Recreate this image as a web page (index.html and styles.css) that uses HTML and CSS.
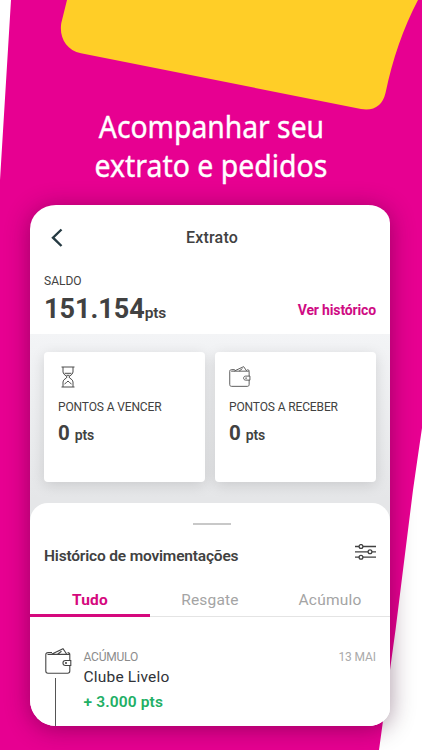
FILE: index.html
```html
<!DOCTYPE html>
<html lang="pt-BR">
<head>
<meta charset="utf-8">
<title>Extrato</title>
<link rel="stylesheet" href="styles.css">
</head>
<body>
<svg width="0" height="0" class="defs" aria-hidden="true">
  <symbol id="wallet" viewBox="0 0 27 26">
    <path d="M7 4.500H3.200C1.700 4.500.8 5.200.8 6.600V23c0 1.400.8 2.200 2.200 2.200h19.600c1.400 0 2.200-.8 2.200-2.200v-5.500M24.800 12.500V6.600c0-1.400-.8-2.100-2.200-2.100M2.500 6.400h22M6.500 6.200 18 .8l3.800 5.400M12.500 6.200l4-3M25.800 12.500h-5.300c-3.400 0-3.400 5 0 5h5.300z"/>
    <circle cx="21" cy="15" r=".5"/>
  </symbol>
</svg>
<main class="promo">
  <svg class="backdrop" viewBox="0 0 422 750" aria-hidden="true">
    <path fill="#e70091" d="M11 0H422V428Q418 455 413 490L395.500 630L379 750H0V180Z"/>
    <path fill="#ffce27" d="M67 0H418Q396 42 385.500 93Q381 112 361 109L81 53.300C66 50 59 37 61.300 23Z"/>
  </svg>
  <h1 class="headline"><span class="line">Acompanhar seu</span><span class="line second">extrato e pedidos</span></h1>
  <section class="phone">
    <header class="bar">
      <svg class="back" viewBox="0 0 12 20"><path d="M10.500 1.500 2 9.700l8.500 8.300"/></svg>
      <h2 class="title">Extrato</h2>
    </header>
    <div class="balance">
      <div>
        <div class="label">SALDO</div>
        <div class="amount">151.154<small>pts</small></div>
      </div>
      <a class="history">Ver histórico</a>
    </div>
    <div class="cards">
      <article class="card">
        <svg class="icon hourglass" viewBox="0 0 14 22"><path d="M.5 1h13M.5 21h13M2 1v5c0 3 4 3.500 4 5s-4 2-4 5v5M12 1v5c0 3-4 3.500-4 5s4 2 4 5v5M3.500 7.300h7M5.500 9.300h3M3.500 18l2-1.500L7 15l1.500 1.500 2 1.500"/></svg>
        <div class="card-label">PONTOS A VENCER</div>
        <div class="points">0 <small>pts</small></div>
      </article>
      <article class="card">
        <svg class="icon"><use href="#wallet"/></svg>
        <div class="card-label">PONTOS A RECEBER</div>
        <div class="points">0 <small>pts</small></div>
      </article>
    </div>
    <section class="sheet">
      <div class="handle"></div>
      <div class="sheet-head">
        <h3 class="sheet-title">Histórico de movimentações</h3>
        <svg class="filter" viewBox="0 0 21 16"><path d="M0 2.500h4M8 2.500h13M0 7.800h13M17 7.800h4M0 13.200h4M8 13.200h13"/><circle cx="6" cy="2.500" r="1.900"/><circle cx="15" cy="7.800" r="1.900"/><circle cx="6" cy="13.200" r="1.900"/></svg>
      </div>
      <nav class="tabs"><span class="tab active">Tudo</span><span class="tab">Resgate</span><span class="tab">Acúmulo</span></nav>
      <div class="entry">
        <div class="rail"><svg class="entry-icon"><use href="#wallet"/></svg><i class="stem"></i></div>
        <div class="detail">
          <div class="kind">ACÚMULO</div>
          <div class="name">Clube Livelo</div>
          <div class="gain">+ 3.000 pts</div>
        </div>
        <time class="date">13 MAI</time>
      </div>
    </section>
  </section>
</main>
</body>
</html>
```
FILE: styles.css
```css
* { box-sizing: border-box; }
body { margin: 0; font-family: Roboto, "Liberation Sans", sans-serif; color: #414141; }
h1, h2, h3 { margin: 0; }
.defs { position: absolute; }
.promo { position: relative; width: 422px; height: 750px; overflow: hidden; background: #fff; padding-top: 107px; }
.backdrop { position: absolute; inset: 0; width: 422px; height: 750px; }
.headline { position: relative; height: 98px; display: flex; flex-direction: column; align-items: center; color: #fff; font: 400 31px/39px "Noto Sans", sans-serif; white-space: nowrap; -webkit-text-stroke: .4px #fff; }
.line { transform: scaleX(.912); }
.second { transform: scaleX(.917); }
.phone { position: relative; display: flex; flex-direction: column; width: 360px; height: 521px; margin-left: 30px; overflow: hidden; background: #fff; border-radius: 26px 22px 22px 26px / 24px 18px 18px 26px; box-shadow: 0 3px 24px rgba(50, 0, 35, .42); }
.bar, .balance, .cards { flex-shrink: 0; }
.bar { display: flex; align-items: center; height: 66px; padding-left: 21px; }
.back { width: 12px; height: 20px; margin-top: -1px; fill: none; stroke: #263b43; stroke-width: 2.400; }
.title { flex: 1; margin-right: 29px; text-align: center; font-size: 16px; font-weight: 500; line-height: 20px; letter-spacing: .2px; }
.balance { display: flex; justify-content: space-between; height: 63px; padding: 3px 14px 0; }
.label { font-size: 12px; line-height: 14px; }
.amount { margin-top: 4px; font-size: 27px; font-weight: 700; line-height: 34px; white-space: nowrap; }
.amount small { font-size: 15.500px; font-weight: 600; letter-spacing: -.25px; }
.history { margin-top: 27px; color: #cf0b83; font-size: 14px; font-weight: 700; line-height: 18px; letter-spacing: -.15px; }
.cards { display: flex; gap: 10px; height: 187px; margin-bottom: -18px; padding: 18px 14px 39px; background: linear-gradient(#f3f4f6, #e5e6e8 88%); }
.card { flex: 1; padding: 14px 14px; border-radius: 4px; background: #fff; box-shadow: 0 3px 14px rgba(0, 0, 0, .13); }
.icon { display: block; width: 22px; height: 21px; fill: none; stroke: #4c4c4c; stroke-width: 1.100; }
.hourglass { width: 14px; height: 22px; margin: 0 0 -1px 3px; stroke-width: 1; }
.card-label { margin-top: 13px; font-size: 12px; line-height: 14px; letter-spacing: -.13px; white-space: nowrap; }
.points { margin-top: 7px; font-size: 20.500px; font-weight: 700; line-height: 24px; }
.points small { font-size: 14px; font-weight: 600; letter-spacing: -.25px; }
.sheet { position: relative; flex: 1; min-height: 0; border-radius: 18px 18px 0 0; background: #fff; }
.handle { width: 38px; height: 2px; margin: 0 auto; transform: translate(2px, 20px); background: #c8c8c8; }
.sheet-head { display: flex; justify-content: space-between; height: 78px; padding: 39px 14px 0; }
.sheet-title { margin-top: 2px; font-size: 15.500px; font-weight: 600; line-height: 20px; letter-spacing: -.18px; }
.filter { width: 21px; height: 16px; fill: none; stroke: #414141; stroke-width: 1.300; }
.tabs { display: flex; height: 34px; border-bottom: 1px solid #e4e4e4; }
.tab { flex: 1; height: 34px; text-align: center; color: #a4a4a4; font-size: 15.500px; line-height: 34px; letter-spacing: .2px; }
.active { border-bottom: 3px solid #d5087d; color: #d5087d; font-weight: 700; }
.entry { display: flex; padding: 31px 14px 0; }
.rail { width: 39.500px; }
.entry-icon { display: block; width: 27px; height: 26px; margin-left: .5px; fill: none; stroke: #454545; stroke-width: 1.100; }
.stem { display: block; width: 1px; height: 60px; margin: 4px 0 0 11px; background: #555; }
.detail { flex: 1; padding-top: 2px; }
.kind { color: #8c8c8c; font-size: 12px; line-height: 14px; letter-spacing: -.2px; }
.name { margin-top: 3px; color: #303338; font-size: 15.500px; line-height: 20px; letter-spacing: .2px; }
.gain { margin-top: 5px; color: #22af65; font-size: 15.500px; font-weight: 600; line-height: 20px; letter-spacing: .15px; }
.date { padding-top: 2px; color: #aaa; font-size: 12px; line-height: 14px; letter-spacing: -.1px; }
```
